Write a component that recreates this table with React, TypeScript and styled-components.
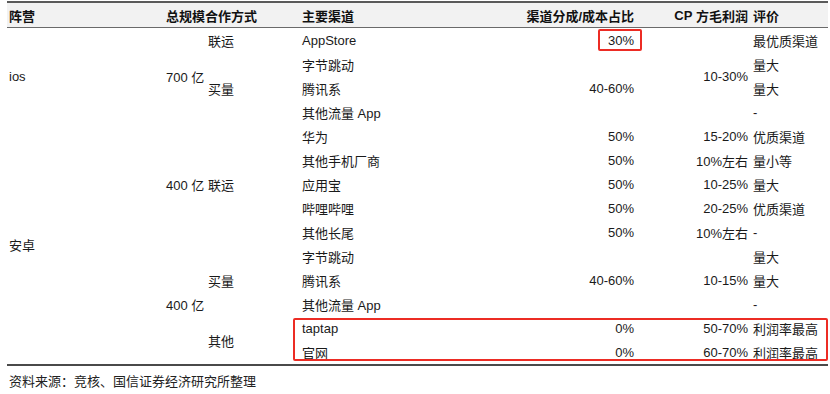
import { createGlobalStyle, styled } from 'styled-components';

type Align = 'left' | 'right';

interface CellData {
  col: number;
  row: number;
  span?: number;
  text: string;
  align?: Align;
}

const GlobalStyle = createGlobalStyle`
  html, body {
    margin: 0;
    padding: 0;
    background: #ffffff;
  }
  body {
    font-family: 'Liberation Sans', 'Noto Sans CJK SC', sans-serif;
    font-size: 13px;
    color: #1a1a1a;
  }
`;

// column paddings so the text lands where the report puts it
const colPad: Record<number, string> = {
  1: '0 0 0 2px',
  2: '0 0 0 4px',
  3: '0 0 0 3px',
  4: '0 0 0 4px',
  5: '0 2px 0 0',
  6: '0 2px 0 0',
  7: '0 0 0 3px',
};

const body: CellData[] = [
  { col: 1, row: 1, span: 4, text: 'ios' },
  { col: 1, row: 5, span: 10, text: '安卓' },

  { col: 2, row: 1, span: 4, text: '700 亿' },
  { col: 2, row: 5, span: 5, text: '400 亿' },
  { col: 2, row: 10, span: 5, text: '400 亿' },

  { col: 3, row: 1, text: '联运' },
  { col: 3, row: 2, span: 3, text: '买量' },
  { col: 3, row: 5, span: 5, text: '联运' },
  { col: 3, row: 10, span: 3, text: '买量' },
  { col: 3, row: 13, span: 2, text: '其他' },

  ...[
    'AppStore',
    '字节跳动',
    '腾讯系',
    '其他流量 App',
    '华为',
    '其他手机厂商',
    '应用宝',
    '哔哩哔哩',
    '其他长尾',
    '字节跳动',
    '腾讯系',
    '其他流量 App',
    'taptap',
    '官网',
  ].map((text, i) => ({ col: 4, row: i + 1, text })),

  { col: 5, row: 1, text: '30%', align: 'right' },
  { col: 5, row: 2, span: 3, text: '40-60%', align: 'right' },
  ...[5, 6, 7, 8, 9].map((row) => ({ col: 5, row, text: '50%', align: 'right' as Align })),
  { col: 5, row: 10, span: 3, text: '40-60%', align: 'right' },
  { col: 5, row: 13, text: '0%', align: 'right' },
  { col: 5, row: 14, text: '0%', align: 'right' },

  { col: 6, row: 1, span: 4, text: '10-30%', align: 'right' },
  { col: 6, row: 5, text: '15-20%', align: 'right' },
  { col: 6, row: 6, text: '10%左右', align: 'right' },
  { col: 6, row: 7, text: '10-25%', align: 'right' },
  { col: 6, row: 8, text: '20-25%', align: 'right' },
  { col: 6, row: 9, text: '10%左右', align: 'right' },
  { col: 6, row: 10, span: 3, text: '10-15%', align: 'right' },
  { col: 6, row: 13, text: '50-70%', align: 'right' },
  { col: 6, row: 14, text: '60-70%', align: 'right' },

  ...[
    '最优质渠道',
    '量大',
    '量大',
    '-',
    '优质渠道',
    '量小等',
    '量大',
    '优质渠道',
    '-',
    '量大',
    '量大',
    '-',
    '利润率最高',
    '利润率最高',
  ].map((text, i) => ({ col: 7, row: i + 1, text })),
];

const App = () => {
  return (
    <>
      <GlobalStyle />
      <PageS>
        <TableS>
          <HeaderS>
            <HeadCellS $col={1}>阵营</HeadCellS>
            <HeadCellS $col={2} $span={2}>
              总规模合作方式
            </HeadCellS>
            <HeadCellS $col={4}>主要渠道</HeadCellS>
            <HeadCellS $col={5} $align='right'>
              渠道分成/成本占比
            </HeadCellS>
            <HeadCellS $col={6} $align='right'>
              <b>CP</b>&nbsp;方毛利润
            </HeadCellS>
            <HeadCellS $col={7}>评价</HeadCellS>
          </HeaderS>
          <BodyS>
            {body.map((cell, i) => (
              <CellS
                key={i}
                $col={cell.col}
                $row={cell.row}
                $span={cell.span ?? 1}
                $align={cell.align ?? 'left'}
              >
                {cell.text}
              </CellS>
            ))}
            <CellMarkS />
            <RowsMarkS />
          </BodyS>
        </TableS>
        <SourceS>资料来源：竞核、国信证券经济研究所整理</SourceS>
      </PageS>
    </>
  );
};

export default App;

const PageS = styled.div`
  width: 830px;
  height: 394px;
  padding: 1px 2px 0 7px;
  box-sizing: border-box;
  overflow: hidden;
`;

const TableS = styled.div`
  width: 821px;
  border-bottom: 2px solid #4a4a4a;
`;

const columns = '155px 43px 93px 202px 136px 114px 78px';

const HeaderS = styled.div`
  display: grid;
  grid-template-columns: ${columns};
  height: 27px;
  box-sizing: border-box;
  background: #f2f2f2;
  border-top: 2px solid #5a5a5a;
  border-bottom: 1px solid #6a6a6a;
  font-weight: 700;
`;

const HeadCellS = styled.div<{ $col: number; $span?: number; $align?: Align }>`
  grid-column: ${({ $col, $span }) => `${$col} / span ${$span ?? 1}`};
  display: flex;
  align-items: center;
  justify-content: ${({ $align }) => ($align === 'right' ? 'flex-end' : 'flex-start')};
  padding: ${({ $col }) => colPad[$col]};
  white-space: nowrap;
  color: #111;

  b {
    font-weight: 700;
  }
`;

const BodyS = styled.div`
  position: relative;
  display: grid;
  grid-template-columns: ${columns};
  grid-template-rows: repeat(14, 24px);
`;

const CellS = styled.div<{ $col: number; $row: number; $span: number; $align: Align }>`
  grid-column: ${({ $col }) => $col};
  grid-row: ${({ $row, $span }) => `${$row} / span ${$span}`};
  display: flex;
  align-items: center;
  justify-content: ${({ $align }) => ($align === 'right' ? 'flex-end' : 'flex-start')};
  padding: ${({ $col }) => colPad[$col]};
  white-space: nowrap;
`;

// red highlight boxes laid over the table
const CellMarkS = styled.div`
  grid-column: 5;
  grid-row: 1;
  justify-self: end;
  align-self: center;
  width: 44px;
  height: 22px;
  margin-right: -6px;
  box-sizing: border-box;
  border: 2px solid #ec2c24;
  border-radius: 2px;
  pointer-events: none;
`;

const RowsMarkS = styled.div`
  grid-column: 4 / 8;
  grid-row: 13 / span 2;
  margin: 2px 0 3px -5px;
  box-sizing: border-box;
  border: 2px solid #ec2c24;
  border-radius: 2px;
  pointer-events: none;
`;

const SourceS = styled.div`
  margin-top: 5px;
  padding-left: 2px;
  font-size: 13px;
  color: #222;
`;
